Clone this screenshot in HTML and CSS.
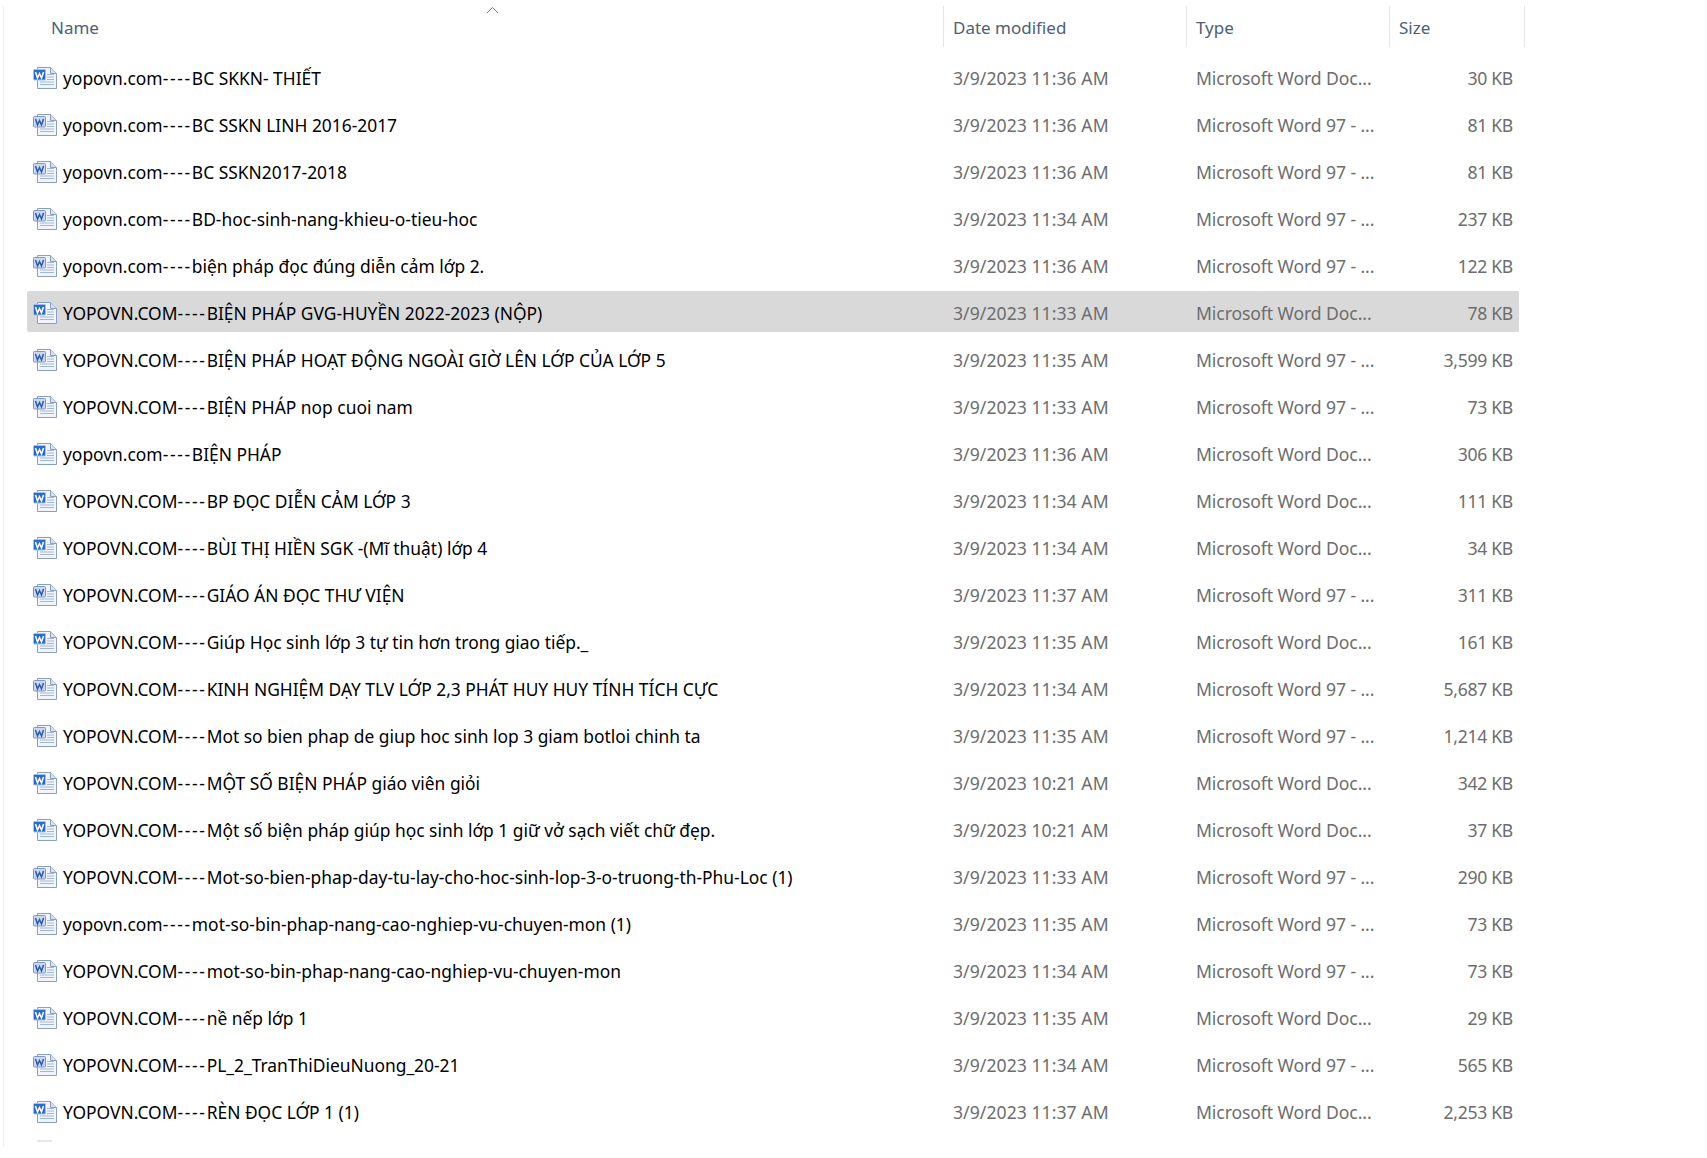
FILE: index.html
```html
<!DOCTYPE html>
<html lang="vi">
<head>
  <meta charset="UTF-8">
  <title>File list</title>
  <link rel="stylesheet" href="styles.css">
</head>
<body>

  <!-- Icons -->
  <svg class="sprites" aria-hidden="true">
    <symbol id="docx" viewBox="0 0 24 22">
      <path d="M4.5 .5h13l6 6v15h-19z" fill="#f1f5fb" stroke="#8a9fc2"/>
      <path d="M17.5 .5v6h6" fill="#d5e0f0" stroke="#8a9fc2"/>
      <path d="M14 7.5h7M14 10h7M14 12.5h7M7 15h14M7 17.5h14" stroke="#a3b8d8"/>
      <rect x="0.5" y="2.5" width="12" height="10.5" rx="1" fill="#2b6ccb" stroke="#a5c0ea"/>
      <polyline points="2.5,5 4.5,11 6.5,6.5 8.5,11 10.5,5" fill="none" stroke="#fff" stroke-width="1.5"/>
    </symbol>
    <symbol id="doc" viewBox="0 0 24 22">
      <path d="M4.5 .5h13l6 6v15h-19z" fill="#f1f5fb" stroke="#8a9fc2"/>
      <path d="M17.5 .5v6h6" fill="#d5e0f0" stroke="#8a9fc2"/>
      <path d="M14 7.5h7M14 10h7M14 12.5h7M7 15h14M7 17.5h14" stroke="#a3b8d8"/>
      <rect x="0.5" y="2.5" width="12" height="10.5" rx="1" fill="#cbd8f1" stroke="#7f97c9"/>
      <polyline points="2.5,5 4.5,11 6.5,6.5 8.5,11 10.5,5" fill="none" stroke="#2d5aa8" stroke-width="1.5"/>
    </symbol>
  </svg>

  <div class="explorer">

    <!-- Column headers -->
    <div class="head">
      <div class="head-cell head-name">Name
        <svg class="sort-arrow" width="13" height="8" viewBox="0 0 13 8"><polyline points="1,7 6.5,1.5 12,7" fill="none" stroke="#7a7a7a"/></svg>
      </div>
      <div class="head-cell">Date modified</div>
      <div class="head-cell">Type</div>
      <div class="head-cell">Size</div>
    </div>

    <!-- Files -->
    <div class="files">
      <div class="row"><div class="name"><svg class="icon"><use href="#docx"/></svg><span>yopovn.com<span class="dashes">----</span>BC SKKN- THIẾT</span></div><div class="date">3/9/2023 11:36 AM</div><div class="type">Microsoft Word Doc...</div><div class="size">30 KB</div></div>
      <div class="row"><div class="name"><svg class="icon"><use href="#doc"/></svg><span>yopovn.com<span class="dashes">----</span>BC SSKN LINH 2016-2017</span></div><div class="date">3/9/2023 11:36 AM</div><div class="type">Microsoft Word 97 - ...</div><div class="size">81 KB</div></div>
      <div class="row"><div class="name"><svg class="icon"><use href="#doc"/></svg><span>yopovn.com<span class="dashes">----</span>BC SSKN2017-2018</span></div><div class="date">3/9/2023 11:36 AM</div><div class="type">Microsoft Word 97 - ...</div><div class="size">81 KB</div></div>
      <div class="row"><div class="name"><svg class="icon"><use href="#doc"/></svg><span>yopovn.com<span class="dashes">----</span>BD-hoc-sinh-nang-khieu-o-tieu-hoc</span></div><div class="date">3/9/2023 11:34 AM</div><div class="type">Microsoft Word 97 - ...</div><div class="size">237 KB</div></div>
      <div class="row"><div class="name"><svg class="icon"><use href="#doc"/></svg><span>yopovn.com<span class="dashes">----</span>biện pháp đọc đúng diễn cảm lớp 2.</span></div><div class="date">3/9/2023 11:36 AM</div><div class="type">Microsoft Word 97 - ...</div><div class="size">122 KB</div></div>
      <div class="row selected"><div class="name"><svg class="icon"><use href="#docx"/></svg><span>YOPOVN.COM<span class="dashes">----</span>BIỆN PHÁP GVG-HUYỀN 2022-2023 (NỘP)</span></div><div class="date">3/9/2023 11:33 AM</div><div class="type">Microsoft Word Doc...</div><div class="size">78 KB</div></div>
      <div class="row"><div class="name"><svg class="icon"><use href="#doc"/></svg><span>YOPOVN.COM<span class="dashes">----</span>BIỆN PHÁP HOẠT ĐỘNG NGOÀI GIỜ LÊN LỚP CỦA LỚP 5</span></div><div class="date">3/9/2023 11:35 AM</div><div class="type">Microsoft Word 97 - ...</div><div class="size">3,599 KB</div></div>
      <div class="row"><div class="name"><svg class="icon"><use href="#doc"/></svg><span>YOPOVN.COM<span class="dashes">----</span>BIỆN PHÁP nop cuoi nam</span></div><div class="date">3/9/2023 11:33 AM</div><div class="type">Microsoft Word 97 - ...</div><div class="size">73 KB</div></div>
      <div class="row"><div class="name"><svg class="icon"><use href="#docx"/></svg><span>yopovn.com<span class="dashes">----</span>BIỆN PHÁP</span></div><div class="date">3/9/2023 11:36 AM</div><div class="type">Microsoft Word Doc...</div><div class="size">306 KB</div></div>
      <div class="row"><div class="name"><svg class="icon"><use href="#docx"/></svg><span>YOPOVN.COM<span class="dashes">----</span>BP ĐỌC DIỄN CẢM LỚP 3</span></div><div class="date">3/9/2023 11:34 AM</div><div class="type">Microsoft Word Doc...</div><div class="size">111 KB</div></div>
      <div class="row"><div class="name"><svg class="icon"><use href="#docx"/></svg><span>YOPOVN.COM<span class="dashes">----</span>BÙI THỊ HIỀN SGK -(Mĩ thuật) lớp 4</span></div><div class="date">3/9/2023 11:34 AM</div><div class="type">Microsoft Word Doc...</div><div class="size">34 KB</div></div>
      <div class="row"><div class="name"><svg class="icon"><use href="#doc"/></svg><span>YOPOVN.COM<span class="dashes">----</span>GIÁO ÁN ĐỌC THƯ VIỆN</span></div><div class="date">3/9/2023 11:37 AM</div><div class="type">Microsoft Word 97 - ...</div><div class="size">311 KB</div></div>
      <div class="row"><div class="name"><svg class="icon"><use href="#docx"/></svg><span>YOPOVN.COM<span class="dashes">----</span>Giúp Học sinh lớp 3 tự tin hơn trong giao tiếp._</span></div><div class="date">3/9/2023 11:35 AM</div><div class="type">Microsoft Word Doc...</div><div class="size">161 KB</div></div>
      <div class="row"><div class="name"><svg class="icon"><use href="#doc"/></svg><span>YOPOVN.COM<span class="dashes">----</span>KINH NGHIỆM DẠY TLV LỚP 2,3 PHÁT HUY HUY TÍNH TÍCH CỰC</span></div><div class="date">3/9/2023 11:34 AM</div><div class="type">Microsoft Word 97 - ...</div><div class="size">5,687 KB</div></div>
      <div class="row"><div class="name"><svg class="icon"><use href="#doc"/></svg><span>YOPOVN.COM<span class="dashes">----</span>Mot so bien phap de giup hoc sinh lop 3 giam botloi chinh ta</span></div><div class="date">3/9/2023 11:35 AM</div><div class="type">Microsoft Word 97 - ...</div><div class="size">1,214 KB</div></div>
      <div class="row"><div class="name"><svg class="icon"><use href="#docx"/></svg><span>YOPOVN.COM<span class="dashes">----</span>MỘT SỐ BIỆN PHÁP giáo viên giỏi</span></div><div class="date">3/9/2023 10:21 AM</div><div class="type">Microsoft Word Doc...</div><div class="size">342 KB</div></div>
      <div class="row"><div class="name"><svg class="icon"><use href="#docx"/></svg><span>YOPOVN.COM<span class="dashes">----</span>Một số biện pháp giúp học sinh lớp 1 giữ vở sạch viết chữ đẹp.</span></div><div class="date">3/9/2023 10:21 AM</div><div class="type">Microsoft Word Doc...</div><div class="size">37 KB</div></div>
      <div class="row"><div class="name"><svg class="icon"><use href="#doc"/></svg><span>YOPOVN.COM<span class="dashes">----</span>Mot-so-bien-phap-day-tu-lay-cho-hoc-sinh-lop-3-o-truong-th-Phu-Loc (1)</span></div><div class="date">3/9/2023 11:33 AM</div><div class="type">Microsoft Word 97 - ...</div><div class="size">290 KB</div></div>
      <div class="row"><div class="name"><svg class="icon"><use href="#doc"/></svg><span>yopovn.com<span class="dashes">----</span>mot-so-bin-phap-nang-cao-nghiep-vu-chuyen-mon (1)</span></div><div class="date">3/9/2023 11:35 AM</div><div class="type">Microsoft Word 97 - ...</div><div class="size">73 KB</div></div>
      <div class="row"><div class="name"><svg class="icon"><use href="#doc"/></svg><span>YOPOVN.COM<span class="dashes">----</span>mot-so-bin-phap-nang-cao-nghiep-vu-chuyen-mon</span></div><div class="date">3/9/2023 11:34 AM</div><div class="type">Microsoft Word 97 - ...</div><div class="size">73 KB</div></div>
      <div class="row"><div class="name"><svg class="icon"><use href="#docx"/></svg><span>YOPOVN.COM<span class="dashes">----</span>nề nếp lớp 1</span></div><div class="date">3/9/2023 11:35 AM</div><div class="type">Microsoft Word Doc...</div><div class="size">29 KB</div></div>
      <div class="row"><div class="name"><svg class="icon"><use href="#doc"/></svg><span>YOPOVN.COM<span class="dashes">----</span>PL_2_TranThiDieuNuong_20-21</span></div><div class="date">3/9/2023 11:34 AM</div><div class="type">Microsoft Word 97 - ...</div><div class="size">565 KB</div></div>
      <div class="row"><div class="name"><svg class="icon"><use href="#docx"/></svg><span>YOPOVN.COM<span class="dashes">----</span>RÈN ĐỌC LỚP 1 (1)</span></div><div class="date">3/9/2023 11:37 AM</div><div class="type">Microsoft Word Doc...</div><div class="size">2,253 KB</div></div>
      <div class="next-row-edge"></div>
    </div>
  </div>

</body>
</html>
```

FILE: styles.css
```css
* { margin: 0; padding: 0; box-sizing: border-box; }

html, body {
  height: 100%;
  overflow: hidden;
  background-color: #fff;
}

body {
  padding: 6px 0 0 3px;
  font-family: "Noto Sans", sans-serif;
  font-size: 17.6px;
}

.sprites {
  display: none;
}

.explorer {
  height: 1141px;
  border-left: 1px solid #f0f0f0;
  padding-left: 23px;
}

/* Column headers */
.head {
  display: grid;
  grid-template-columns: 917px 243px 203px 135px;
  height: 41px;
  width: 1498px;
  margin-bottom: 9px;
  font-size: 17px;
  color: #4c607a;
}

.head-cell {
  display: flex;
  align-items: center;
  padding: 2px 0 0 9px;
  border-right: 1px solid #e5e5e5;
}

.head-name {
  position: relative;
  padding-left: 24px;
}

.sort-arrow {
  position: absolute;
  top: 0;
  left: 459px;
}

/* Rows */
.files {
  display: flex;
  flex-direction: column;
  gap: 6px;
  width: 1492px;
}

.row {
  display: grid;
  grid-template-columns: 916px 243px 203px 1fr;
  align-items: center;
  height: 41px;
  padding-top: 2px;
  border-radius: 2px;
}

.selected {
  background-color: #d9d9d9;
}

.name {
  display: flex;
  align-items: center;
  padding-left: 6px;
  font-size: 17.4px;
  color: #000;
  white-space: nowrap;
}

.dashes {
  letter-spacing: 1.7px;
}

.icon {
  width: 24px;
  height: 22px;
  margin-right: 6px;
  flex-shrink: 0;
}

.date, .type, .size {
  color: #6d6d6d;
  white-space: nowrap;
}

.date, .type {
  padding-left: 10px;
}

.date {
  letter-spacing: 0.05px;
}

.type {
  letter-spacing: -0.1px;
}

.size {
  padding-right: 6px;
  text-align: right;
  letter-spacing: -0.3px;
}

.next-row-edge {
  width: 15px;
  height: 2px;
  margin: 3px 0 0 10px;
  background-color: #e3e6f5;
}
```
